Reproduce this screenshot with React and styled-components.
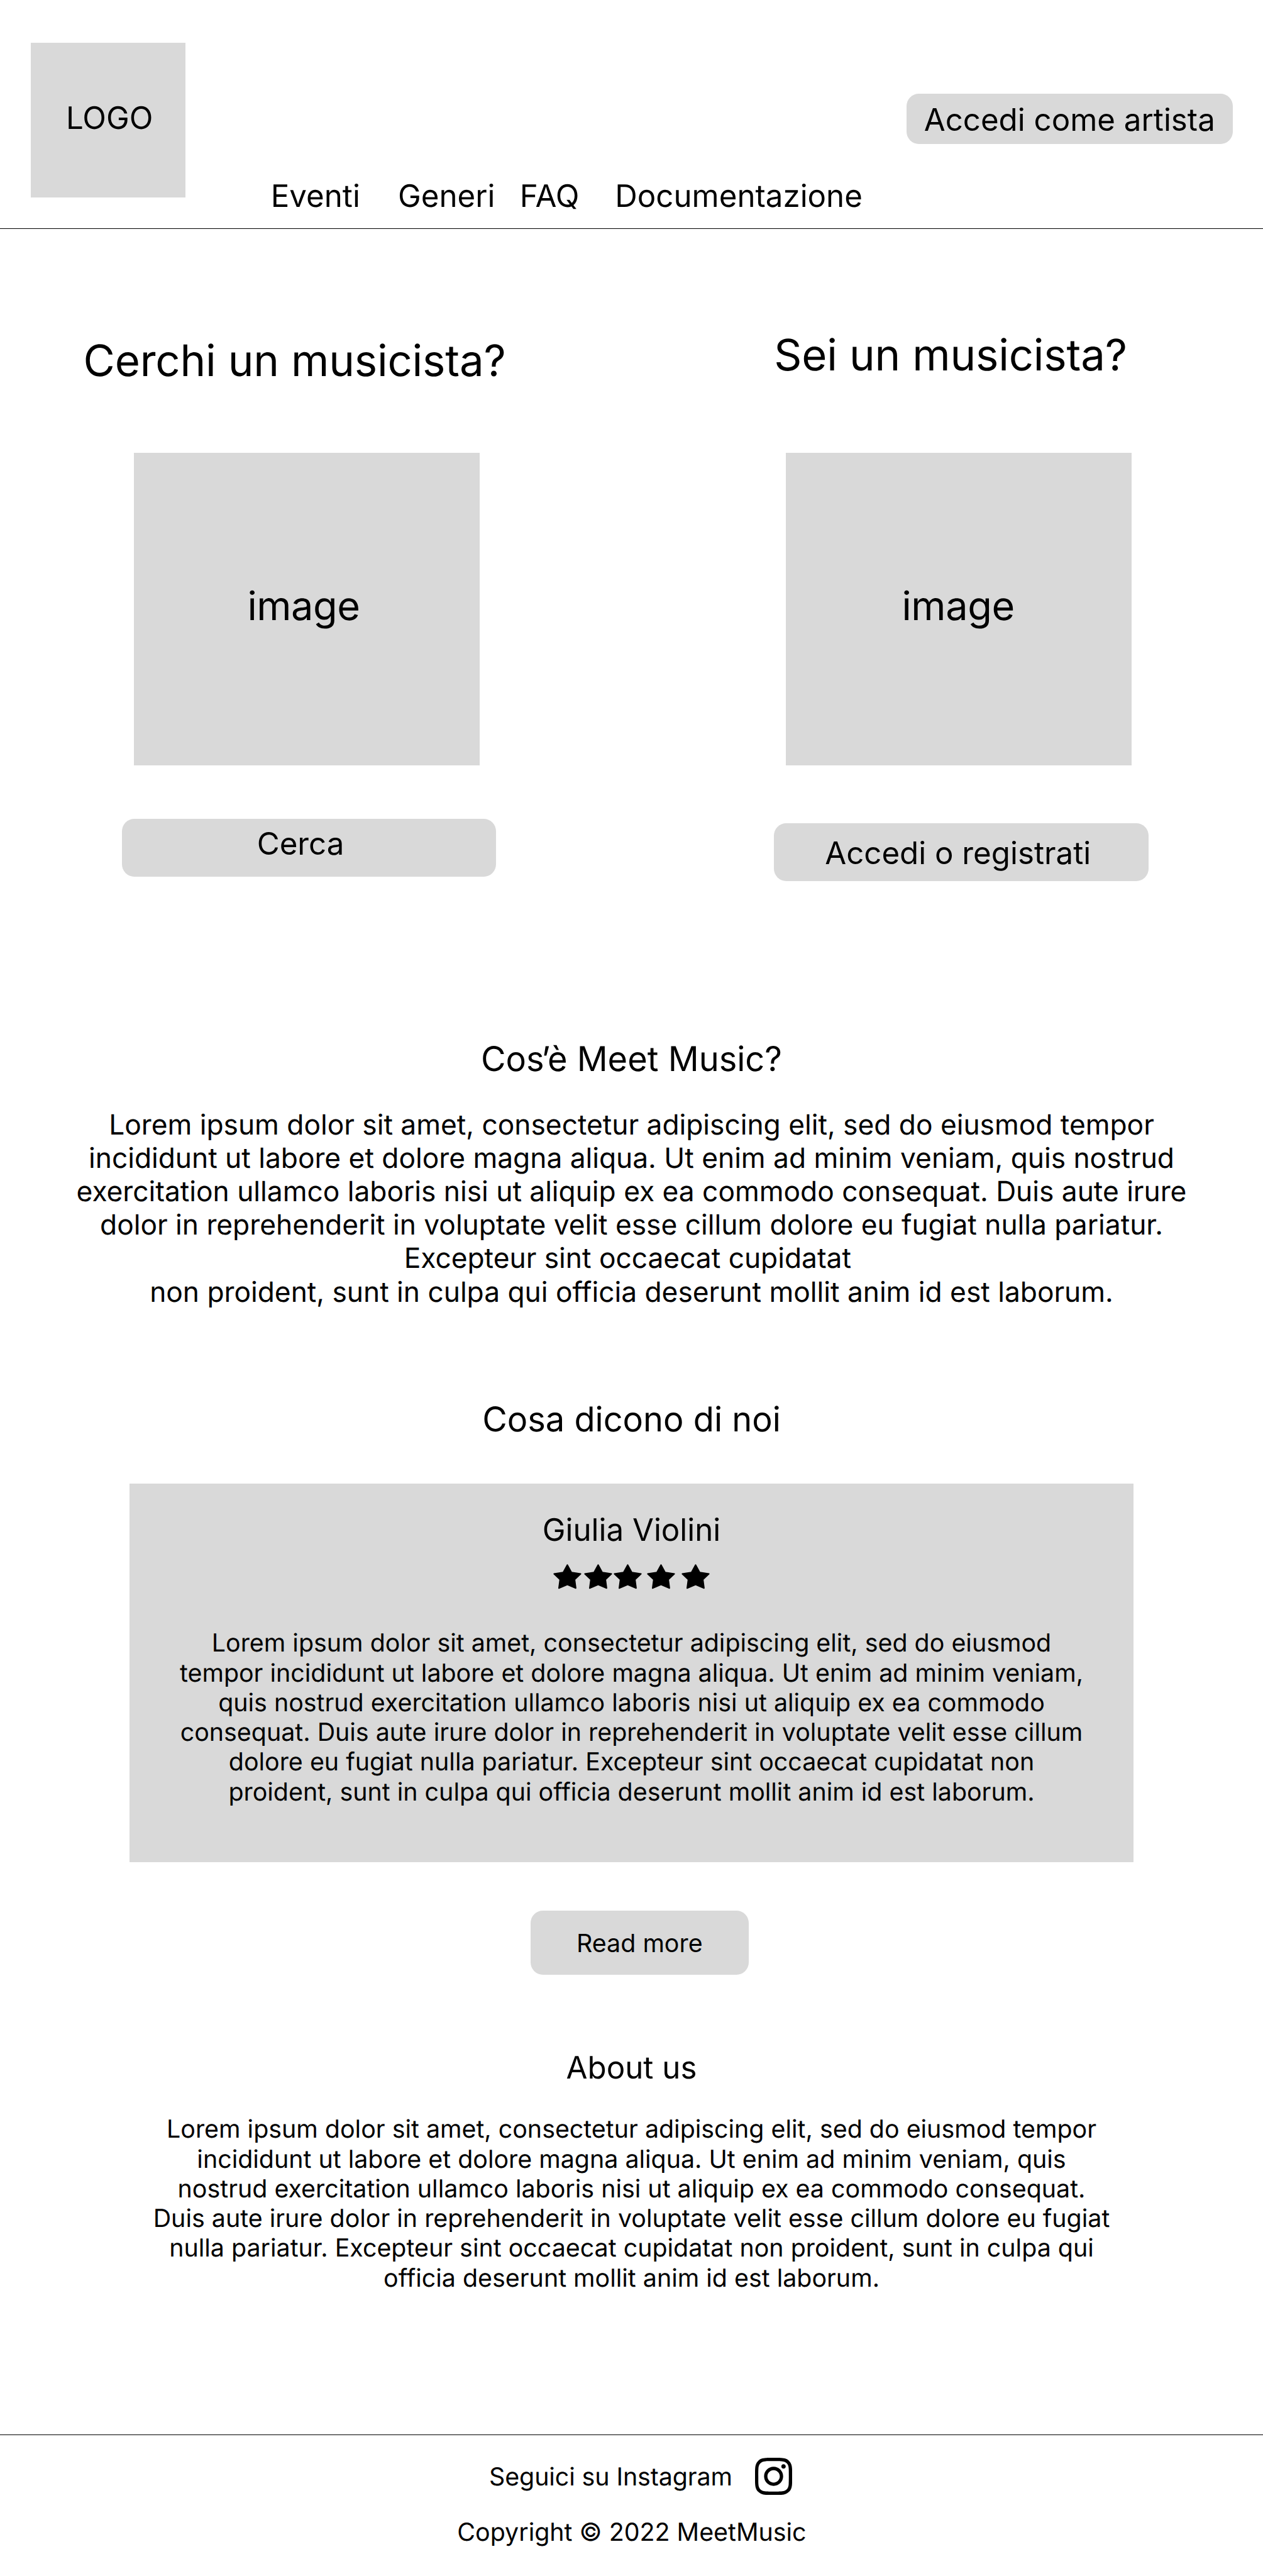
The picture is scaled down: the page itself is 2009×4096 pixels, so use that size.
import React from "react";
import styled, { createGlobalStyle } from "styled-components";

// Design units are drawn at a fixed fraction of their nominal size.
const SCALE = 0.98482;
const u = (n) => `${+(n * SCALE).toFixed(3)}px`;

const GREY = "#d9d9d9";
const INK = "#000";

const GlobalStyle = createGlobalStyle`
  *, *::before, *::after { box-sizing: border-box; }
  html, body { margin: 0; padding: 0; background: #fff; }
  body {
    font-family: Inter, "Liberation Sans", sans-serif;
    font-weight: 400;
    color: ${INK};
    text-rendering: geometricPrecision;
  }
  h1, h2, h3, p { margin: 0; font-weight: 400; }
  a { color: inherit; text-decoration: none; }
`;

const Page = styled.div`
  width: 2009px;
  height: 4096px;
  display: flex;
  flex-direction: column;
  overflow: hidden;
  background: #fff;
`;

/* ---------- header ---------- */

const Header = styled.header`
  display: flex;
  align-items: flex-start;
  height: 364px;
  flex: none;
  padding: 0 ${u(49)} 0 ${u(50)};
  border-bottom: 1px solid ${INK};
`;

const Logo = styled.a`
  width: ${u(250)};
  height: ${u(250)};
  margin-top: ${u(69)};
  padding: ${u(90.4)} 0 0 ${u(56.5)};
  background: ${GREY};
  font-size: ${u(50)};
  line-height: ${u(61)};
`;

const Nav = styled.nav`
  display: flex;
  margin: ${u(285.4)} auto 0 ${u(137.4)};
`;

const NavLink = styled.a`
  margin-left: ${(p) => u(p.$gap)};
  font-size: ${u(50)};
  line-height: ${u(61)};
  white-space: nowrap;
`;

const LoginButton = styled.button`
  display: flex;
  align-items: center;
  justify-content: center;
  width: ${u(527)};
  height: ${u(82)};
  margin-top: ${u(151)};
  padding: ${u(1.6)} 0 0;
  border: 0;
  border-radius: ${u(20)};
  background: ${GREY};
  color: inherit;
  font: inherit;
  font-size: ${u(50)};
  line-height: ${u(61)};
  white-space: nowrap;
`;

/* ---------- hero ---------- */

const Hero = styled.section`
  display: grid;
  grid-template-columns: ${u(1250.3)} 1fr;
  flex: none;
  height: ${u(1308.2)};
`;

const Column = styled.div`
  display: flex;
  flex-direction: column;
  align-items: flex-start;
  padding: ${(p) => u(p.$top)} 0 0 ${(p) => u(p.$left)};
`;

const HeroTitle = styled.h1`
  height: ${(p) => u(p.$height)};
  font-size: ${u(70)};
  line-height: ${u(85)};
  letter-spacing: ${u(-0.2)};
  white-space: nowrap;
`;

const Picture = styled.div`
  width: ${u(558.6)};
  height: ${u(505)};
  margin-left: ${(p) => u(p.$indent)};
  padding: ${u(210)} 0 0 ${(p) => u(p.$label)};
  background: ${GREY};
  font-size: ${u(64)};
  line-height: ${u(77)};
  letter-spacing: ${u(-0.4)};
`;

const HeroButton = styled.button`
  width: ${u(604.5)};
  height: ${u(94)};
  margin: ${(p) => u(p.$gap)} 0 0 ${(p) => u(p.$indent)};
  padding: ${(p) => u(p.$drop)} 0 ${(p) => u(p.$lift)} ${(p) => u(p.$label)};
  border: 0;
  border-radius: ${u(20)};
  background: ${GREY};
  color: inherit;
  font: inherit;
  font-size: ${u(50)};
  line-height: ${u(61)};
  text-align: left;
  white-space: nowrap;
`;

/* ---------- text sections ---------- */

const Section = styled.section`
  display: flex;
  flex-direction: column;
  align-items: center;
  flex: none;
  height: ${(p) => u(p.$height)};
  text-align: center;
`;

const SectionTitle = styled.h2`
  margin-bottom: ${(p) => u(p.$gap)};
  font-size: ${(p) => u(p.$size)};
  line-height: ${(p) => u(p.$line)};
  white-space: nowrap;
`;

const Tight = styled.span`
  letter-spacing: ${u(-4.5)};
`;

const Copy = styled.p`
  font-size: ${(p) => u(p.$size)};
  line-height: ${(p) => u(p.$line)};
  letter-spacing: ${(p) => u(p.$track || 0)};
  text-align: center;
  white-space: pre-line;
`;

const Review = styled.article`
  display: flex;
  flex-direction: column;
  align-items: center;
  width: ${u(1621)};
  height: ${u(611)};
  padding-top: ${u(43.4)};
  background: ${GREY};
`;

const Reviewer = styled.h3`
  font-size: ${u(50)};
  line-height: ${u(61)};
`;

const Stars = styled.div`
  display: flex;
  margin: ${u(25.6)} 0 ${u(63.5)};
`;

const StarIcon = styled.svg`
  display: block;
  width: ${u(45.6)};
  height: ${u(40)};
  margin-left: ${(p) => u(p.$gap)};
  fill: ${INK};
  stroke: ${INK};
  stroke-width: 6;
  stroke-linejoin: round;
`;

const MoreButton = styled.button`
  width: ${u(352)};
  height: ${u(103.5)};
  margin: ${u(78)} 0 0 ${u(26)};
  padding: ${u(3)} 0 0;
  border: 0;
  border-radius: ${u(20)};
  background: ${GREY};
  color: inherit;
  font: inherit;
  font-size: ${u(40)};
  line-height: ${u(48)};
`;

/* ---------- footer ---------- */

const Footer = styled.footer`
  display: flex;
  flex-direction: column;
  align-items: center;
  flex: 1;
  padding-top: ${u(36)};
  border-top: 1px solid ${INK};
  font-size: ${u(40)};
  line-height: ${u(48)};
`;

const Social = styled.a`
  display: flex;
  align-items: flex-start;
  gap: ${u(37)};
  height: ${u(60)};
  margin-left: ${u(30)};
`;

const SocialLabel = styled.span`
  padding-top: ${u(7.2)};
  letter-spacing: ${u(-0.1)};
`;

const InstagramIcon = styled.svg`
  display: block;
  width: ${u(60)};
  height: ${u(60)};
  fill: ${INK};
`;

const Copyright = styled.p`
  margin: ${u(37.1)} 0 0 ${u(1)};
`;

const NAV = [
  { label: "Eventi", gap: 0 },
  { label: "Generi", gap: 61 },
  { label: "FAQ", gap: 40 },
  { label: "Documentazione", gap: 57.8 },
];

const STAR_GAPS = [0, 4.4, 2, 7.9, 10.3];

const Star = ({ gap }) => (
  <StarIcon $gap={gap} viewBox="0 0 136 120" aria-hidden="true">
    <path d="M68 4 88 40 132.500 47.500 103.500 75 109 116.500 68 99 27 116.500 32.500 75 3.500 47.500 48 40Z" />
  </StarIcon>
);

const Instagram = () => (
  <InstagramIcon viewBox="0 0 24 24" aria-hidden="true">
    <path d="M12 0C8.74 0 8.333.015 7.053.072 5.775.132 4.905.333 4.14.63c-.789.306-1.459.717-2.126 1.384S.935 3.35.63 4.14C.333 4.905.131 5.775.072 7.053.012 8.333 0 8.74 0 12s.015 3.667.072 4.947c.06 1.277.261 2.148.558 2.913.306.788.717 1.459 1.384 2.126.667.666 1.336 1.079 2.126 1.384.766.296 1.636.499 2.913.558C8.333 23.988 8.74 24 12 24s3.667-.015 4.947-.072c1.277-.06 2.148-.262 2.913-.558.788-.306 1.459-.718 2.126-1.384.666-.667 1.079-1.335 1.384-2.126.296-.765.499-1.636.558-2.913.06-1.28.072-1.687.072-4.947s-.015-3.667-.072-4.947c-.06-1.277-.262-2.149-.558-2.913-.306-.789-.718-1.459-1.384-2.126C21.319 1.347 20.651.935 19.86.63c-.765-.297-1.636-.499-2.913-.558C15.667.012 15.26 0 12 0zm0 2.16c3.203 0 3.585.016 4.85.071 1.17.055 1.805.249 2.227.415.562.217.96.477 1.382.896.419.42.679.819.896 1.381.164.422.36 1.057.413 2.227.057 1.266.07 1.646.07 4.85s-.015 3.585-.074 4.85c-.061 1.17-.256 1.805-.421 2.227-.224.562-.479.96-.899 1.382-.419.419-.824.679-1.38.896-.42.164-1.065.36-2.235.413-1.274.057-1.649.07-4.859.07-3.211 0-3.586-.015-4.859-.074-1.171-.061-1.816-.256-2.236-.421-.569-.224-.96-.479-1.379-.899-.421-.419-.69-.824-.9-1.38-.165-.42-.359-1.065-.42-2.235-.045-1.26-.061-1.649-.061-4.844 0-3.196.016-3.586.061-4.861.061-1.17.255-1.814.42-2.234.21-.57.479-.96.9-1.381.419-.419.81-.689 1.379-.898.42-.166 1.051-.361 2.221-.421 1.275-.045 1.65-.06 4.859-.06zm0 3.678c-3.405 0-6.162 2.76-6.162 6.162 0 3.405 2.76 6.162 6.162 6.162 3.405 0 6.162-2.76 6.162-6.162 0-3.405-2.76-6.162-6.162-6.162zM12 16c-2.21 0-4-1.79-4-4s1.79-4 4-4 4 1.79 4 4-1.79 4-4 4zm7.846-10.405c0 .795-.646 1.44-1.44 1.44-.795 0-1.44-.646-1.44-1.44 0-.794.646-1.439 1.44-1.439.793-.001 1.44.645 1.44 1.439z" />
  </InstagramIcon>
);

const ABOUT_MEET_MUSIC = `Lorem ipsum dolor sit amet, consectetur adipiscing elit, sed do eiusmod tempor
incididunt ut labore et dolore magna aliqua. Ut enim ad minim veniam, quis nostrud
exercitation ullamco laboris nisi ut aliquip ex ea commodo consequat. Duis aute irure
dolor in reprehenderit in voluptate velit esse cillum dolore eu fugiat nulla pariatur.
Excepteur sint occaecat cupidatat\u00a0
non proident, sunt in culpa qui officia deserunt mollit anim id est laborum.`;

const REVIEW = `Lorem ipsum dolor sit amet, consectetur adipiscing elit, sed do eiusmod
tempor incididunt ut labore et dolore magna aliqua. Ut enim ad minim veniam,
quis nostrud exercitation ullamco laboris nisi ut aliquip ex ea commodo
consequat. Duis aute irure dolor in reprehenderit in voluptate velit esse cillum
dolore eu fugiat nulla pariatur. Excepteur sint occaecat cupidatat non
proident, sunt in culpa qui officia deserunt mollit anim id est laborum.`;

const ABOUT_US = `Lorem ipsum dolor sit amet, consectetur adipiscing elit, sed do eiusmod tempor
incididunt ut labore et dolore magna aliqua. Ut enim ad minim veniam, quis
nostrud exercitation ullamco laboris nisi ut aliquip ex ea commodo consequat.
Duis aute irure dolor in reprehenderit in voluptate velit esse cillum dolore eu fugiat
nulla pariatur. Excepteur sint occaecat cupidatat non proident, sunt in culpa qui
officia deserunt mollit anim id est laborum.`;

export default function App() {
  return (
    <>
      <GlobalStyle />
      <Page>
        <Header>
          <Logo>LOGO</Logo>
          <Nav>
            {NAV.map((item) => (
              <NavLink key={item.label} $gap={item.gap}>
                {item.label}
              </NavLink>
            ))}
          </Nav>
          <LoginButton>Accedi come artista</LoginButton>
        </Header>

        <Hero>
          <Column $top={170.4} $left={134.6}>
            <HeroTitle $height={191}>Cerchi un musicista?</HeroTitle>
            <Picture $indent={81.4} $label={183.5}>image</Picture>
            <HeroButton $gap={86} $indent={62.4} $label={218} $drop={0} $lift={14.2}>
              Cerca
            </HeroButton>
          </Column>
          <Column $top={161.4} $left={0}>
            <HeroTitle $height={200}>Sei un musicista?</HeroTitle>
            <Picture $indent={19.3} $label={187}>image</Picture>
            <HeroButton $gap={93} $indent={0} $label={82.1} $drop={1.5} $lift={0}>
              Accedi o registrati
            </HeroButton>
          </Column>
        </Hero>

        <Section $height={581}>
          <SectionTitle $size={55} $line={67} $gap={44.1}>
            Co<Tight>s’</Tight>è Meet Music?
          </SectionTitle>
          <Copy $size={45} $line={54} $track={-0.015}>{ABOUT_MEET_MUSIC}</Copy>
        </Section>

        <Section $height={1048.3}>
          <SectionTitle $size={55} $line={67} $gap={69.9}>
            Cosa dicono di noi
          </SectionTitle>
          <Review>
            <Reviewer>Giulia Violini</Reviewer>
            <Stars>
              {STAR_GAPS.map((gap, i) => (
                <Star key={i} gap={gap} />
              ))}
            </Stars>
            <Copy $size={40} $line={48}>{REVIEW}</Copy>
          </Review>
          <MoreButton>Read more</MoreButton>
        </Section>

        <Section $height={623.7}>
          <SectionTitle $size={50} $line={61} $gap={46}>
            About us
          </SectionTitle>
          <Copy $size={40} $line={48}>{ABOUT_US}</Copy>
        </Section>

        <Footer>
          <Social>
            <SocialLabel>Seguici su Instagram</SocialLabel>
            <Instagram />
          </Social>
          <Copyright>Copyright © 2022 MeetMusic</Copyright>
        </Footer>
      </Page>
    </>
  );
}
